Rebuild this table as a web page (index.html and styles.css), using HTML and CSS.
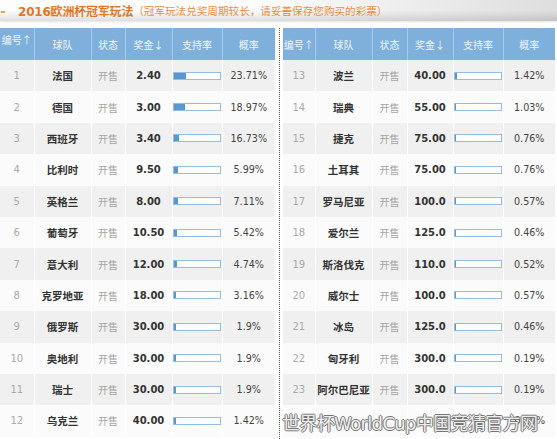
FILE: index.html
```html
<!DOCTYPE html>
<html lang="zh-CN">
<head>
    <meta charset="UTF-8">
    <title>2016欧洲杯冠军玩法</title>
    <link rel="stylesheet" href="styles.css">
</head>
<body>
    <div class="titleBar">
        <span class="marker"></span>
        <span class="mainTitle">2016欧洲杯冠军玩法</span><span class="subTitle">（冠军玩法兑奖周期较长，请妥善保存您购买的彩票）</span>
    </div>

    <div class="tables">
        <table class="oddsTable leftTable">
            <colgroup>
                <col style="width:34px"><col style="width:57px"><col style="width:34px">
                <col style="width:47px"><col style="width:50px"><col style="width:53px">
            </colgroup>
            <thead>
                <tr>
                    <th class="topAlign">编号↑</th>
                    <th>球队</th>
                    <th>状态</th>
                    <th>奖金↓</th>
                    <th>支持率</th>
                    <th>概率</th>
                </tr>
            </thead>
            <tbody>
                <tr><td class="num">1</td><td class="team">法国</td><td class="state">开售</td><td class="prize">2.40</td><td><div class="bar"><div class="fill" style="width:12px"></div></div></td><td class="rate">23.71%</td></tr>
                <tr><td class="num">2</td><td class="team">德国</td><td class="state">开售</td><td class="prize">3.00</td><td><div class="bar"><div class="fill" style="width:11px"></div></div></td><td class="rate">18.97%</td></tr>
                <tr><td class="num">3</td><td class="team">西班牙</td><td class="state">开售</td><td class="prize">3.40</td><td><div class="bar"><div class="fill" style="width:5px"></div></div></td><td class="rate">16.73%</td></tr>
                <tr><td class="num">4</td><td class="team">比利时</td><td class="state">开售</td><td class="prize">9.50</td><td><div class="bar"><div class="fill" style="width:4px"></div></div></td><td class="rate">5.99%</td></tr>
                <tr><td class="num">5</td><td class="team">英格兰</td><td class="state">开售</td><td class="prize">8.00</td><td><div class="bar"><div class="fill" style="width:4px"></div></div></td><td class="rate">7.11%</td></tr>
                <tr><td class="num">6</td><td class="team">葡萄牙</td><td class="state">开售</td><td class="prize">10.50</td><td><div class="bar"><div class="fill" style="width:3px"></div></div></td><td class="rate">5.42%</td></tr>
                <tr><td class="num">7</td><td class="team">意大利</td><td class="state">开售</td><td class="prize">12.00</td><td><div class="bar"><div class="fill" style="width:3px"></div></div></td><td class="rate">4.74%</td></tr>
                <tr><td class="num">8</td><td class="team">克罗地亚</td><td class="state">开售</td><td class="prize">18.00</td><td><div class="bar"><div class="fill" style="width:2px"></div></div></td><td class="rate">3.16%</td></tr>
                <tr><td class="num">9</td><td class="team">俄罗斯</td><td class="state">开售</td><td class="prize">30.00</td><td><div class="bar"><div class="fill" style="width:2px"></div></div></td><td class="rate">1.9%</td></tr>
                <tr><td class="num">10</td><td class="team">奥地利</td><td class="state">开售</td><td class="prize">30.00</td><td><div class="bar"><div class="fill" style="width:2px"></div></div></td><td class="rate">1.9%</td></tr>
                <tr><td class="num">11</td><td class="team">瑞士</td><td class="state">开售</td><td class="prize">30.00</td><td><div class="bar"><div class="fill" style="width:2px"></div></div></td><td class="rate">1.9%</td></tr>
                <tr><td class="num">12</td><td class="team">乌克兰</td><td class="state">开售</td><td class="prize">40.00</td><td><div class="bar"><div class="fill" style="width:2px"></div></div></td><td class="rate">1.42%</td></tr>
            </tbody>
        </table>

        <div class="divider"></div>

        <table class="oddsTable rightTable">
            <colgroup>
                <col style="width:32px"><col style="width:57px"><col style="width:35px">
                <col style="width:46px"><col style="width:50px"><col style="width:52px">
            </colgroup>
            <thead>
                <tr>
                    <th>编号↑</th>
                    <th>球队</th>
                    <th>状态</th>
                    <th>奖金↓</th>
                    <th>支持率</th>
                    <th>概率</th>
                </tr>
            </thead>
            <tbody>
                <tr><td class="num">13</td><td class="team">波兰</td><td class="state">开售</td><td class="prize">40.00</td><td><div class="bar"><div class="fill" style="width:2px"></div></div></td><td class="rate">1.42%</td></tr>
                <tr><td class="num">14</td><td class="team">瑞典</td><td class="state">开售</td><td class="prize">55.00</td><td><div class="bar"><div class="fill" style="width:1px"></div></div></td><td class="rate">1.03%</td></tr>
                <tr><td class="num">15</td><td class="team">捷克</td><td class="state">开售</td><td class="prize">75.00</td><td><div class="bar"><div class="fill" style="width:1px"></div></div></td><td class="rate">0.76%</td></tr>
                <tr><td class="num">16</td><td class="team">土耳其</td><td class="state">开售</td><td class="prize">75.00</td><td><div class="bar"><div class="fill" style="width:1px"></div></div></td><td class="rate">0.76%</td></tr>
                <tr><td class="num">17</td><td class="team">罗马尼亚</td><td class="state">开售</td><td class="prize">100.0</td><td><div class="bar"><div class="fill" style="width:1px"></div></div></td><td class="rate">0.57%</td></tr>
                <tr><td class="num">18</td><td class="team">爱尔兰</td><td class="state">开售</td><td class="prize">125.0</td><td><div class="bar"><div class="fill" style="width:1px"></div></div></td><td class="rate">0.46%</td></tr>
                <tr><td class="num">19</td><td class="team">斯洛伐克</td><td class="state">开售</td><td class="prize">110.0</td><td><div class="bar"><div class="fill" style="width:1px"></div></div></td><td class="rate">0.52%</td></tr>
                <tr><td class="num">20</td><td class="team">威尔士</td><td class="state">开售</td><td class="prize">100.0</td><td><div class="bar"><div class="fill" style="width:1px"></div></div></td><td class="rate">0.57%</td></tr>
                <tr><td class="num">21</td><td class="team">冰岛</td><td class="state">开售</td><td class="prize">125.0</td><td><div class="bar"><div class="fill" style="width:1px"></div></div></td><td class="rate">0.46%</td></tr>
                <tr><td class="num">22</td><td class="team">匈牙利</td><td class="state">开售</td><td class="prize">300.0</td><td><div class="bar"><div class="fill" style="width:1px"></div></div></td><td class="rate">0.19%</td></tr>
                <tr><td class="num">23</td><td class="team">阿尔巴尼亚</td><td class="state">开售</td><td class="prize">300.0</td><td><div class="bar"><div class="fill" style="width:1px"></div></div></td><td class="rate">0.19%</td></tr>
                <!-- last row sits under the site watermark, only the rate peeks through -->
                <tr><td></td><td></td><td></td><td></td><td></td><td class="rate peek">0.19%</td></tr>
            </tbody>
        </table>
    </div>

    <div class="watermark">世界杯WorldCup中国竞猜官方网</div>
</body>
</html>
```

FILE: styles.css
```css
body {
    margin: 0;
    background: #fff;
    font-family: "DejaVu Sans", "Noto Sans CJK SC", sans-serif;
    overflow: hidden;
}
.titleBar {
    height: 21px;
    display: flex;
    align-items: center;
    background:
        linear-gradient(to bottom, rgba(0,0,0,0) 50%, rgba(0,0,0,0.12)),
        linear-gradient(to right, #fdfdfd 45%, #dedede);
    box-shadow: 0 1px 2px rgba(0,0,0,0.12);
    white-space: nowrap;
}
.marker {
    width: 4px;
    height: 2px;
    margin: 3px 13px 0 1px;
    background: #f0a050;
}
.mainTitle {
    font-family: "DejaVu Sans", "Noto Sans CJK SC", sans-serif;
    font-weight: bold;
    font-size: 12px;
    letter-spacing: -0.2px;
    color: #e4761f;
}
.subTitle {
    font-family: "Noto Sans CJK SC", sans-serif;
    font-size: 10.6px;
    color: #ec8b3d;
}

.tables {
    display: flex;
    align-items: stretch;
    margin-top: 7px;
    height: 411px;
}
.divider {
    width: 0;
    margin: 0 3px 0 4px;
    border-left: 1px dotted #555;
}
.oddsTable {
    border-collapse: collapse;
    table-layout: fixed;
    align-self: flex-start;
}
.leftTable { width: 275px; }
.rightTable { width: 272px; }

.oddsTable th {
    height: 32px;
    padding: 0;
    background: #7fb0dc;
    color: #eef5fb;
    font-family: "Noto Sans CJK SC", sans-serif;
    font-weight: normal;
    font-size: 10px;
    border-left: 1px solid #a8cbea;
    text-align: center;
}
.oddsTable th:first-child { border-left: none; }
.oddsTable th.topAlign {
    height: 28px;
    vertical-align: top;
    padding-top: 4px;
}

.oddsTable td {
    height: 31.4px;
    padding: 0;
    text-align: center;
    border-left: 1px solid #fff;
    white-space: nowrap;
}
.oddsTable td:first-child { border-left: none; }
.oddsTable tbody tr:nth-child(odd) td { background: #f0f0f0; }
.oddsTable tbody tr:nth-child(even) td { background: #fbfbfb; }

.num {
    font-size: 10px;
    color: #aaa;
}
.team {
    font-family: "Noto Sans CJK SC", sans-serif;
    font-size: 10.5px;
    font-weight: bold;
    color: #333;
}
.state {
    font-family: "Noto Sans CJK SC", sans-serif;
    font-size: 10px;
    color: #a5a5a5;
}
.prize {
    font-size: 10px;
    font-weight: bold;
    color: #333;
}
.rate {
    font-size: 9.6px;
    color: #444;
}
.rate.peek {
    text-align: right;
    padding-right: 10px;
}
.bar {
    width: 46px;
    height: 6px;
    margin: 0 auto;
    border: 1px solid #93bde3;
    background: #fff;
}
.fill {
    height: 100%;
    min-width: 1px;
    background: #5b97cf;
}

.watermark {
    position: absolute;
    left: 282px;
    top: 409px;
    font-family: "DejaVu Sans", "Noto Sans CJK SC", sans-serif;
    font-size: 18px;
    color: rgba(255,255,255,0.9);
    letter-spacing: -0.65px;
    text-shadow: 1px 0 0 #777, -1px 0 0 #777, 0 1px 0 #777, 0 -1px 0 #777;
    white-space: nowrap;
}
```
